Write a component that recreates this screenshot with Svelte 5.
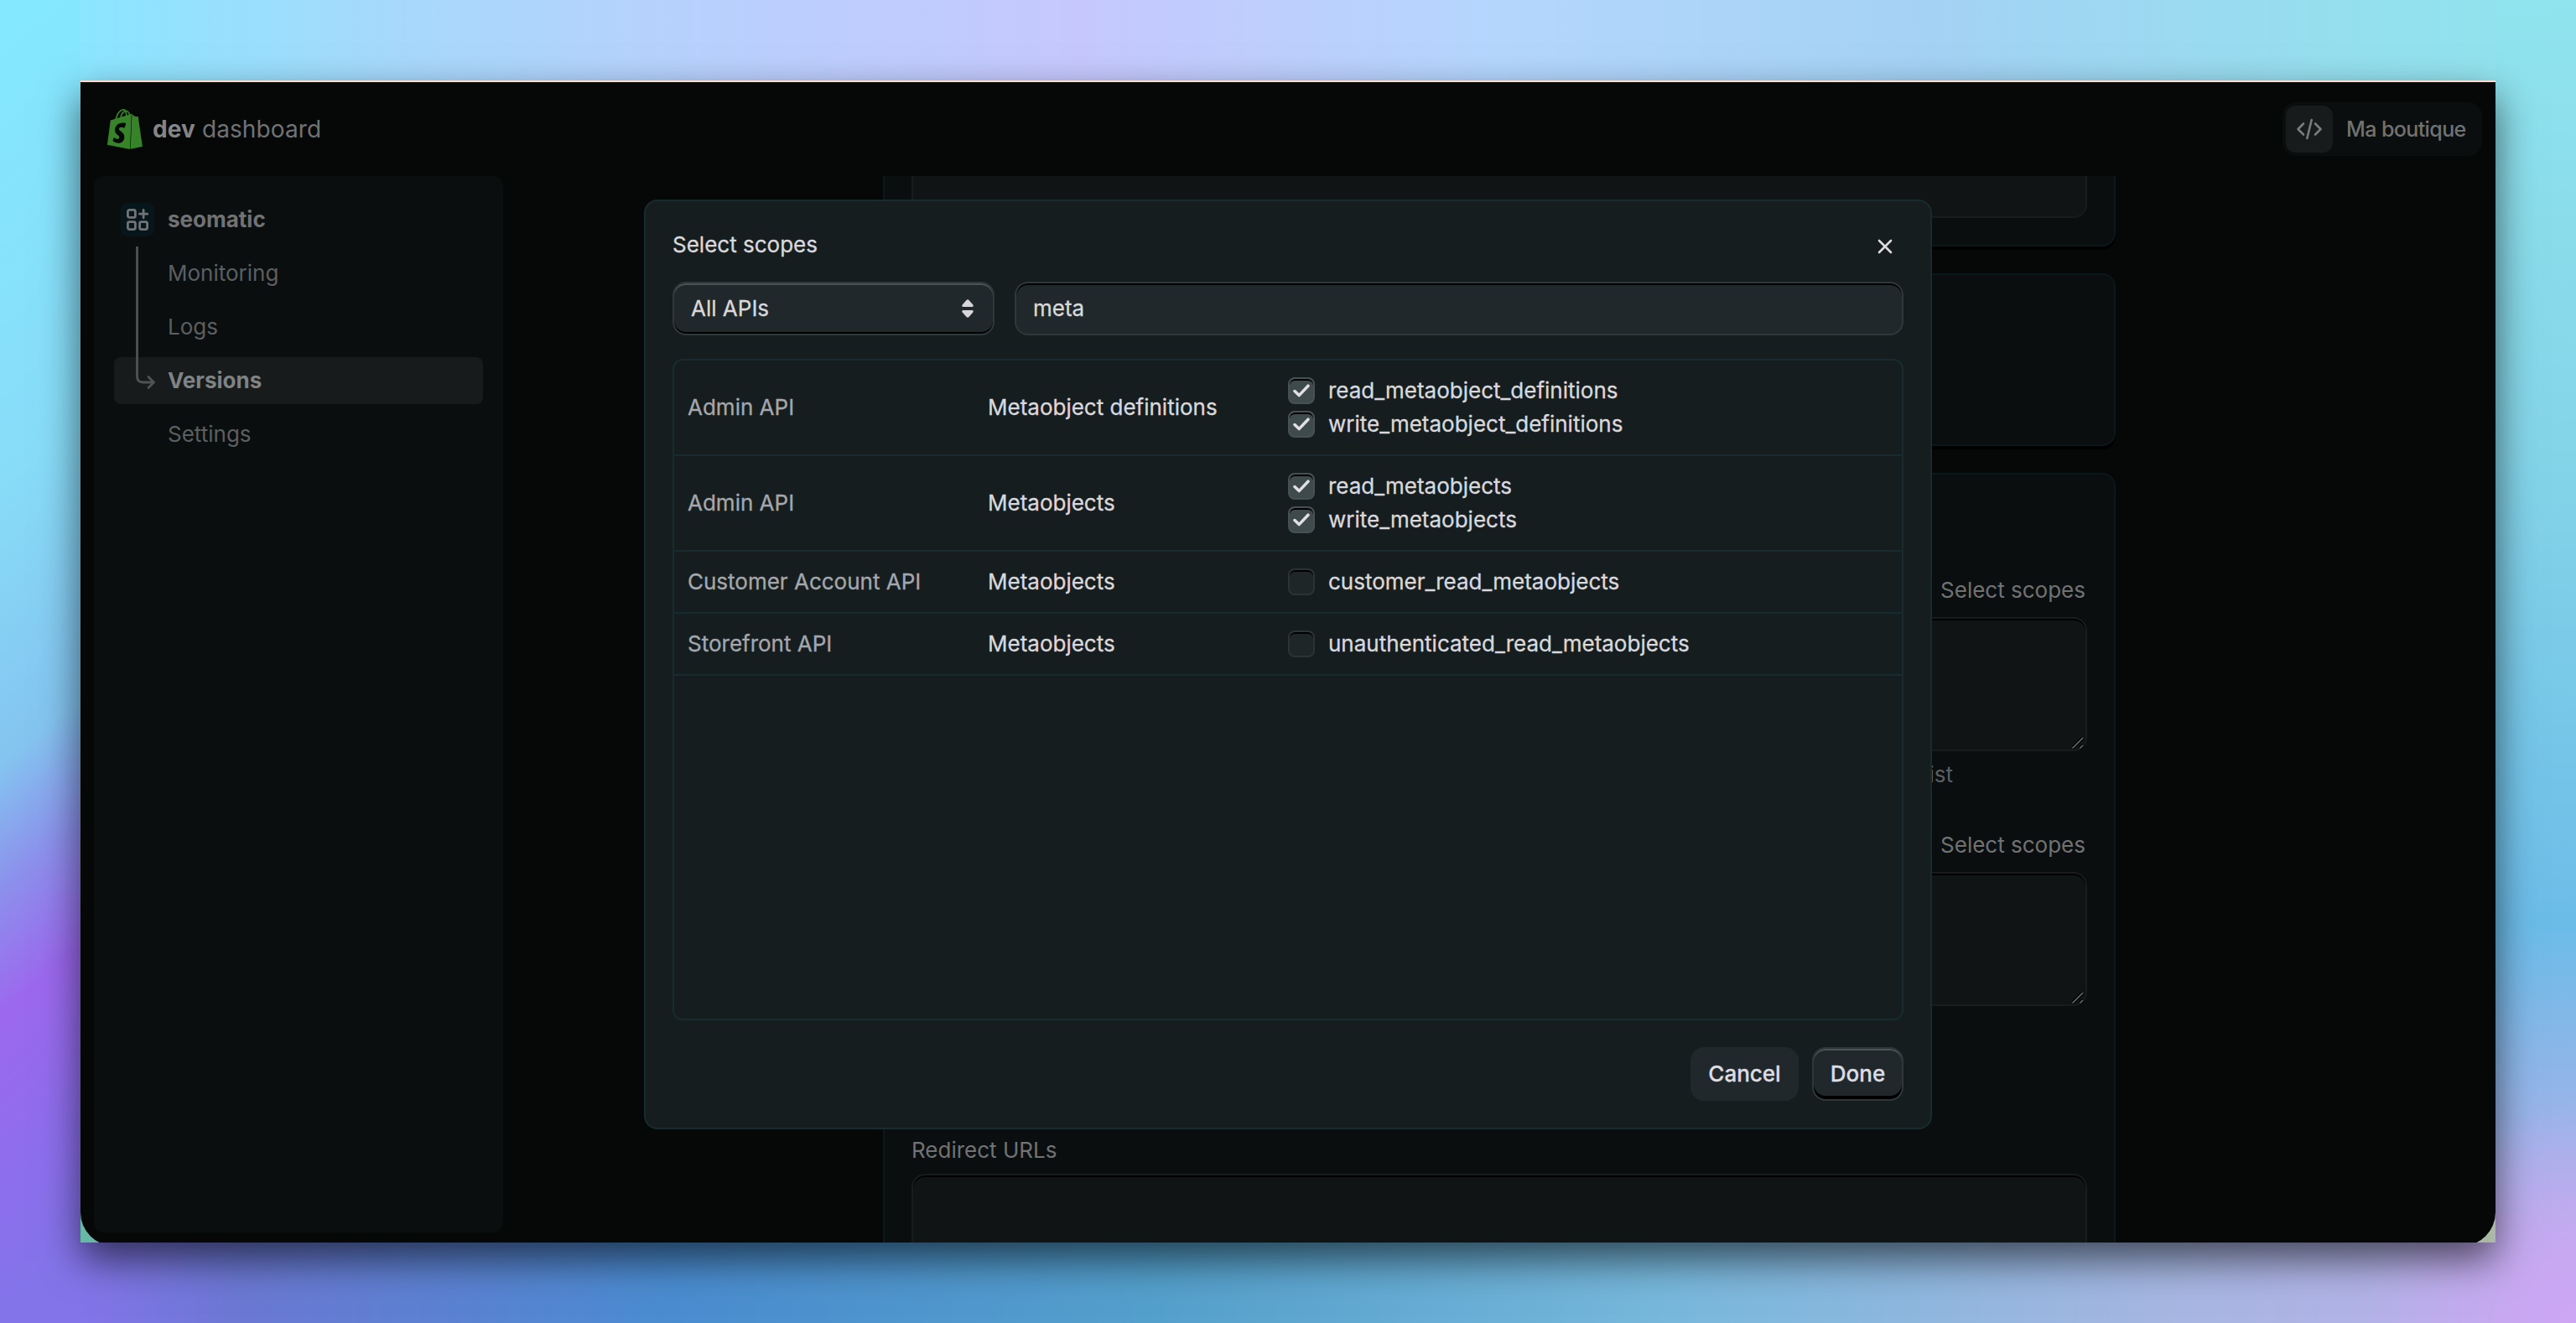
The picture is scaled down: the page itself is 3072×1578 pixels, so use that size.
<script>
    let api = "All APIs"
    let search = "meta"

    const navItems = ["Monitoring", "Logs", "Versions", "Settings"]
    let current = "Versions"

    let rows = [
        {
            api: "Admin API",
            name: "Metaobject definitions",
            scopes: [
                { id: "read_metaobject_definitions", checked: true },
                { id: "write_metaobject_definitions", checked: true }
            ]
        },
        {
            api: "Admin API",
            name: "Metaobjects",
            scopes: [
                { id: "read_metaobjects", checked: true },
                { id: "write_metaobjects", checked: true }
            ]
        },
        {
            api: "Customer Account API",
            name: "Metaobjects",
            scopes: [{ id: "customer_read_metaobjects", checked: false }]
        },
        {
            api: "Storefront API",
            name: "Metaobjects",
            scopes: [{ id: "unauthenticated_read_metaobjects", checked: false }]
        }
    ]

    function toggle(scope) {
        scope.checked = !scope.checked
        rows = rows
    }
</script>

{#snippet grip()}
    <svg class="grip" viewBox="0 0 16 16">
        <path d="M1.5 14.5L14 2M10.5 14.5L14 11" stroke="#000" stroke-width="4" />
        <path d="M1.5 14.5L14 2M10.5 14.5L14 11" stroke="#6c6d6d" stroke-width="1.6" />
    </svg>
{/snippet}

<div class="desktop">
    <div class="frame">
        <div class="window">
            <header>
                <div class="brand">
                    <svg width="42" height="48" viewBox="1.45 0 21.1 24">
                        <path fill="#37832a" d="M15.337 23.979l7.216-1.561s-2.604-17.613-2.625-17.73c-.018-.116-.114-.192-.211-.192s-1.929-.136-1.929-.136-1.275-1.274-1.439-1.411c-.045-.037-.075-.057-.121-.074l-.914 21.104h.023zM11.71 11.305s-.81-.424-1.774-.424c-1.447 0-1.504.906-1.504 1.141 0 1.232 3.24 1.715 3.24 4.629 0 2.295-1.44 3.76-3.406 3.76-2.354 0-3.54-1.465-3.54-1.465l.646-2.086s1.245 1.066 2.28 1.066c.675 0 .975-.545.975-.932 0-1.619-2.654-1.694-2.654-4.359-.034-2.237 1.571-4.416 4.827-4.416 1.257 0 1.875.361 1.875.361l-.945 2.715-.02.01zM11.17.83c.136 0 .271.038.405.135-.984.465-2.064 1.639-2.508 3.992-.656.213-1.293.405-1.889.578C7.697 3.75 8.951.84 11.17.84V.83zm1.235 2.949v.135c-.754.232-1.583.484-2.394.736.466-1.777 1.333-2.645 2.085-2.971.193.501.309 1.176.309 2.1zm.539-2.234c.694.074 1.141.867 1.429 1.755-.349.114-.735.231-1.158.366v-.252c0-.752-.096-1.371-.271-1.871v.002zm2.992 1.289c-.02 0-.06.021-.078.021s-.289.075-.714.21c-.423-1.233-1.176-2.37-2.508-2.37h-.115C12.135.209 11.669 0 11.265 0 8.159 0 6.675 3.877 6.21 5.846c-1.194.365-2.063.636-2.16.674-.675.213-.694.232-.772.87-.075.462-1.83 14.063-1.83 14.063L15.009 24l.927-21.166z" />
                    </svg>
                    <span><b>dev</b> dashboard</span>
                </div>
                <div class="store">
                    <div class="store-icon">
                        <svg width="32" height="26" viewBox="0 0 32 26" fill="none" stroke="#7a7c7c" stroke-width="2.6" stroke-linecap="round" stroke-linejoin="round">
                            <path d="M9 6.5L2.5 13L9 19.5M23 6.5L29.5 13L23 19.5M18.7 2L13.3 24" />
                        </svg>
                    </div>
                    <span>Ma boutique</span>
                </div>
            </header>

            <div class="body">
                <nav>
                    <div class="app">
                        <div class="app-icon">
                            <svg width="26" height="26" viewBox="0 0 26 26" fill="none" stroke="#717476" stroke-width="2.8" stroke-linecap="round" stroke-linejoin="round">
                                <rect x="1.4" y="1.4" width="9" height="9" rx="2" />
                                <rect x="1.4" y="15.6" width="9" height="9" rx="2" />
                                <rect x="15.6" y="15.6" width="9" height="9" rx="2" />
                                <path d="M20.1 1.4V10.8M15.4 6.1H24.8" />
                            </svg>
                        </div>
                        seomatic
                    </div>
                    {#each navItems as item}
                        <div class="item" class:active={item === current}>{item}</div>
                    {/each}
                    <svg class="tree" width="26" height="172" viewBox="0 0 26 172" fill="none" stroke="#505354" stroke-width="2.8">
                        <path d="M2.5 0V155Q2.5 162 9.500 162H22" />
                        <path d="M16 155.500L22.500 162L16 168.500" stroke-linecap="round" stroke-linejoin="round" />
                    </svg>
                </nav>

                <main>
                    <section class="card card-cut">
                        <div class="field field-cut"></div>
                    </section>
                    <section class="card card-mid"></section>
                    <section class="card card-access">
                        <h2>Access</h2>
                        <div class="label"><span>Scopes</span><span>Select scopes</span></div>
                        <div class="field area">{@render grip()}</div>
                        <p class="help">Enter the scopes your app needs as a comma-separated list</p>
                        <div class="label second"><span>Optional scopes</span><span>Select scopes</span></div>
                        <div class="field area">{@render grip()}</div>
                        <div class="label redirect"><span>Redirect URLs</span></div>
                        <div class="field tall"></div>
                    </section>
                </main>
            </div>

            <!-- scope picker -->
            <div class="overlay">
                <div class="modal">
                    <div class="modal-head">
                        <span>Select scopes</span>
                        <svg width="18" height="18" viewBox="0 0 18 18" stroke="#dcdbde" stroke-width="2.6" stroke-linecap="round">
                            <path d="M2 2L16 16M16 2L2 16" />
                        </svg>
                    </div>
                    <div class="filters">
                        <div class="select">
                            {api}
                            <svg width="16" height="22" viewBox="0 0 16 22" fill="#d6d6d9">
                                <path d="M6.500 .9Q8 -.6 9.500 .9L14.300 6.500Q15.600 9 13 9H3Q.4 9 1.700 6.500Z" />
                                <path d="M6.500 21.100Q8 22.600 9.500 21.100L14.300 15.500Q15.600 13 13 13H3Q.4 13 1.700 15.500Z" />
                            </svg>
                        </div>
                        <input bind:value={search}>
                    </div>
                    <div class="table">
                        {#each rows as row}
                            <div class="row">
                                <div class="api">{row.api}</div>
                                <div>{row.name}</div>
                                <div>
                                    {#each row.scopes as scope}
                                        <button class="scope" on:click={() => toggle(scope)}>
                                            <span class="check" class:on={scope.checked}>
                                                {#if scope.checked}
                                                    <svg width="20" height="16" viewBox="0 0 20 16" fill="none" stroke="#e0dfe2" stroke-width="3.5" stroke-linecap="round" stroke-linejoin="round">
                                                        <path d="M2 8.500L7.200 13.600L18 2.200" />
                                                    </svg>
                                                {/if}
                                            </span>
                                            {scope.id}
                                        </button>
                                    {/each}
                                </div>
                            </div>
                        {/each}
                    </div>
                    <div class="actions">
                        <button class="btn">Cancel</button>
                        <button class="btn done">Done</button>
                    </div>
                </div>
            </div>
        </div>
    </div>
</div>

<style>
    :global(body) {
        margin: 0;
    }
    .desktop {
        box-sizing: border-box;
        width: 3072px;
        height: 1578px;
        padding: 96px;
        overflow: hidden;
        font-family: Inter, "Liberation Sans", sans-serif;
        font-size: 26px;
        line-height: 40px;
        background:
            radial-gradient(circle at 100% 100%, #cea5f4, rgba(206, 165, 244, 0) 260px),
            linear-gradient(140deg, #84e9ff, #88dcf8 35%, #84c4f0 55%, #8c90ec 64%, #9c68ee 73%, #8a70ec 88%, #8474ea 94%) left / 96px 100% no-repeat,
            linear-gradient(to bottom, #90e4ee, #84d4e8 35%, #6cbce8 70%, #98b4e8 84%, #b8b0ea 94%) right / 96px 100% no-repeat,
            linear-gradient(to right, #84e9ff, #a8d8fc 16%, #b9d0fd 28%, #c6c8fd 42%, #b4d6fd 58%, #a4d2f4 75%, #94e0ee 92%, #90e4ee) top / 100% 96px no-repeat,
            linear-gradient(to right, #8474ea 3%, #6c78d4 9%, #4a8cd0 26%, #54a0cc 45%, #78b8dc 65%, #a8b6e2 85%, #b8b0ea 97%) bottom / 100% 96px no-repeat;
    }
    .frame {
        height: 1384px;
        border-top: 2px solid #f8dccf;
        overflow: hidden;
        background: linear-gradient(to right, #67b8a4, #abb8a6);
        box-shadow: 0 20px 44px rgba(0, 0, 0, 0.6);
    }
    .window {
        position: relative;
        height: 1388px;
        overflow: hidden;
        border-radius: 0 0 40px 40px;
        background: #060807;
        color: #717273;
    }
    header {
        display: flex;
        justify-content: space-between;
        align-items: center;
        height: 112px;
        padding: 0 16px 0 32px;
    }
    .brand {
        display: flex;
        align-items: center;
        gap: 12px;
        font-size: 28px;
        letter-spacing: 0.1px;
    }
    .brand b {
        font-weight: 700;
        color: #858586;
    }
    .store {
        display: flex;
        align-items: center;
        gap: 16px;
        box-sizing: border-box;
        width: 238px;
        height: 64px;
        padding: 4px;
        border-radius: 16px;
        background: #0a0e0f;
        font-size: 25px;
        font-weight: 500;
        letter-spacing: -0.6px;
        white-space: nowrap;
    }
    .store-icon {
        display: flex;
        align-items: center;
        justify-content: center;
        width: 56px;
        height: 56px;
        border-radius: 12px;
        background: #171b1c;
    }
    .body {
        display: flex;
        height: 1276px;
    }
    nav {
        position: relative;
        box-sizing: border-box;
        width: 488px;
        height: 1260px;
        margin-left: 16px;
        padding: 24px;
        border-radius: 12px;
        background: #0a0e0f;
    }
    .app {
        display: flex;
        align-items: center;
        gap: 16px;
        height: 56px;
        padding-left: 8px;
        font-weight: 700;
    }
    .app-icon {
        display: flex;
        align-items: center;
        justify-content: center;
        width: 40px;
        height: 40px;
        border-radius: 8px;
        background: #07161b;
    }
    .item {
        height: 56px;
        margin-top: 8px;
        padding-left: 64px;
        border-radius: 8px;
        line-height: 56px;
        color: #5c5f60;
    }
    .item.active {
        background: #171b1c;
        color: #7f8384;
        font-weight: 700;
    }
    .tree {
        position: absolute;
        left: 49px;
        top: 84px;
    }
    main {
        width: 1470px;
        height: 1276px;
        margin: 0 auto;
        overflow: hidden;
    }
    .card {
        box-sizing: border-box;
        padding: 32px;
        border: 2px solid #0b1819;
        border-radius: 16px;
        background: #0a0e0f;
        box-shadow: 0 4px 0 #000;
    }
    .card-cut {
        height: 84px;
        padding-top: 0;
        border-top: 0;
        border-radius: 0 0 16px 16px;
    }
    .card-mid {
        height: 206px;
        margin-top: 32px;
    }
    .card-access {
        height: 1000px;
        margin-top: 32px;
    }
    .field {
        position: relative;
        box-sizing: border-box;
        border: 2px solid #191c1d;
        border-radius: 16px;
        background: #111415;
        box-shadow: inset 0 2px 0 #000;
    }
    .field-cut {
        height: 50px;
        border-top: 0;
        border-radius: 0 0 16px 16px;
        box-shadow: none;
    }
    h2 {
        margin: 0 0 46px;
        font-size: 26px;
        font-weight: 600;
        line-height: 40px;
    }
    .label {
        display: flex;
        justify-content: space-between;
        height: 52px;
        padding-right: 2px;
    }
    .area {
        height: 160px;
    }
    .tall {
        height: 200px;
    }
    .grip {
        position: absolute;
        right: 1px;
        bottom: 0;
        width: 16px;
        height: 16px;
        overflow: hidden;
    }
    .help {
        margin: 8px 160px 0 0;
        text-align: right;
        color: #5c5f60;
    }
    .second {
        margin-top: 44px;
    }
    .redirect {
        height: 48px;
        margin-top: 152px;
    }
    .overlay {
        position: absolute;
        inset: 0;
        display: flex;
        justify-content: center;
        align-items: flex-start;
        padding-top: 140px;
    }
    .modal {
        box-sizing: border-box;
        width: 1536px;
        padding: 32px;
        border: 2px solid #182b2e;
        border-radius: 16px;
        background: #161d1f;
        color: #d9d8dc;
        -webkit-text-stroke: 0.3px currentColor;
    }
    .modal-head {
        display: flex;
        justify-content: space-between;
        align-items: center;
        height: 40px;
        padding-right: 13px;
    }
    .modal-head svg {
        margin-top: 4px;
    }
    .filters {
        display: flex;
        gap: 24px;
        margin-top: 24px;
    }
    .select,
    input {
        box-sizing: border-box;
        height: 64px;
        padding: 0 20px;
        border: 2px solid #2f3839;
        border-radius: 16px;
        background: #21282b;
        color: #d9d8dc;
        font: inherit;
    }
    .select {
        display: flex;
        justify-content: space-between;
        align-items: center;
        width: 384px;
        padding-right: 22px;
        box-shadow: inset 0 2px 0 #4b5355, inset 0 -2px 0 #000;
    }
    input {
        flex: 1;
        padding-bottom: 1px;
        outline: none;
        box-shadow: inset 0 2px 0 #000;
    }
    .table {
        box-sizing: border-box;
        height: 789px;
        margin-top: 28px;
        border: 2px solid #182b2e;
        border-radius: 12px;
    }
    .row {
        display: grid;
        grid-template-columns: 358px 358px 1fr;
        align-items: center;
        padding: 16px;
        border-bottom: 2px solid #182b2e;
    }
    .api {
        color: #a3a7ae;
    }
    .scope {
        display: flex;
        align-items: center;
        gap: 16px;
        height: 40px;
        padding: 0;
        border: 0;
        background: none;
        color: inherit;
        font: inherit;
    }
    .check {
        display: flex;
        align-items: center;
        justify-content: center;
        box-sizing: border-box;
        width: 32px;
        height: 32px;
        border: 2px solid #2b3335;
        border-radius: 8px;
        background: #1f2628;
        box-shadow: inset 0 2px 0 #000;
    }
    .check.on {
        border-color: #465154;
        background: #3f4a4d;
    }
    .actions {
        display: flex;
        justify-content: flex-end;
        gap: 16px;
        margin-top: 32px;
    }
    .btn {
        height: 64px;
        width: 129px;
        padding: 0;
        border: 0;
        border-radius: 16px;
        background: #21282b;
        color: #dddce0;
        font: inherit;
        font-weight: 500;
    }
    .done {
        width: 109px;
        border: 2px solid #2f3839;
        box-shadow: inset 0 2px 0 #4b5355, inset 0 -4px 0 #000;
    }
</style>
